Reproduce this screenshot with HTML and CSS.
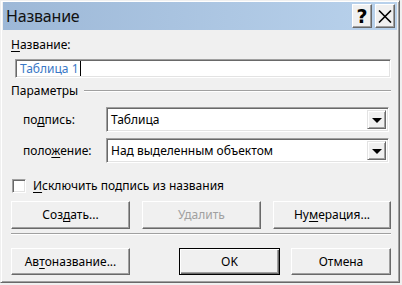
FILE: index.html
```html
<!DOCTYPE html>
<html lang="ru">
<head>
<meta charset="utf-8">
<title>Название</title>
<link rel="stylesheet" href="styles.css">
</head>
<body>
<div class="window">
  <div class="titlebar">
    <span class="title">Название</span>
    <div class="tb-buttons">
      <div class="tb-btn help">?</div>
      <div class="tb-btn close">
        <svg width="14" height="13" viewBox="0 0 14 13"><path d="M1 0.5 L13 12.5 M13 0.5 L1 12.5" stroke="#000" stroke-width="1.6" fill="none"/></svg>
      </div>
    </div>
  </div>
  <div class="content">
    <div class="lbl-name"><u>Н</u>азвание:</div>
    <div class="textbox"><span class="tb-val">Таблица 1</span><span class="caret"></span></div>
    <div class="group"><span class="group-title">Параметры</span><span class="group-line"></span></div>
    <div class="field-row">
      <span class="field-lbl">по<u>д</u>пись:</span>
      <div class="combo"><span class="combo-val">Таблица</span><div class="dd"><span class="arrow"></span></div></div>
    </div>
    <div class="field-row second">
      <span class="field-lbl">поло<u>ж</u>ение:</span>
      <div class="combo"><span class="combo-val">Над выделенным объектом</span><div class="dd"><span class="arrow"></span></div></div>
    </div>
    <div class="check-row">
      <span class="checkbox"></span>
      <span class="check-lbl"><u>И</u>сключить подпись из названия</span>
    </div>
    <div class="btn-row3">
      <div class="btn">Соз<u>д</u>ать...</div>
      <div class="btn disabled">Удалить</div>
      <div class="btn">Ну<u>м</u>ерация...</div>
    </div>
    <div class="sep"></div>
    <div class="btn-row-bottom">
      <div class="btn auto">Ав<u>т</u>оназвание...</div>
      <div class="spacer"></div>
      <div class="btn default">OK</div>
      <div class="btn cancel">Отмена</div>
    </div>
  </div>
</div>
</body>
</html>
```

FILE: styles.css
```css
html, body {
  margin: 0;
  padding: 0;
  background: #f0f0f0;
}
body {
  font-family: "Noto Sans", "Open Sans", sans-serif;
  font-size: 12px;
  color: #000;
}
u { text-decoration: underline; text-underline-offset: 2px; }

.window {
  width: 400px;
  height: 283px;
  box-sizing: border-box;
  background: #f0f0f0;
  border: 1px solid;
  border-color: #f0f0f0 #696969 #696969 #f0f0f0;
  box-shadow: inset 1px 1px 0 #ffffff, inset -1px -1px 0 #a0a0a0;
  padding: 1px 2px 2px 2px;
  display: flex;
  flex-direction: column;
}

.titlebar {
  height: 28px;
  flex: none;
  background: linear-gradient(to right, #9db8d7 0%, #b9d2ec 100%);
  display: flex;
  align-items: center;
  justify-content: space-between;
  padding-left: 3px;
}
.title {
  font-family: "Noto Sans", sans-serif;
  font-size: 16px;
  letter-spacing: -0.2px;
  color: #111;
  line-height: 20px;
}
.tb-buttons {
  display: flex;
  gap: 3px;
  margin-right: 2px;
}
.tb-btn {
  width: 20px;
  height: 24px;
  box-sizing: border-box;
  background: #f0f0f0;
  border: 1px solid;
  border-color: #ffffff #696969 #696969 #ffffff;
  box-shadow: inset -1px -1px 0 #a0a0a0;
  display: flex;
  align-items: center;
  justify-content: center;
}
.help {
  font-family: "DejaVu Sans", sans-serif;
  font-weight: bold;
  font-size: 19px;
  line-height: 20px;
}

.content {
  padding: 7px 6px 0 8px;
  display: flex;
  flex-direction: column;
}
.lbl-name {
  line-height: 16px;
  height: 16px;
}
.textbox {
  margin: 6px 0 0 4px;
  height: 19px;
  box-sizing: border-box;
  background: #fff;
  border: 1px solid;
  border-color: #a0a0a0 #ffffff #ffffff #a0a0a0;
  box-shadow: inset 1px 1px 0 #696969, inset -1px -1px 0 #e3e3e3;
  display: flex;
  align-items: center;
  padding-left: 4px;
}
.tb-val {
  color: #3a78c6;
  font-size: 12px;
  line-height: 14px;
}
.caret {
  width: 1px;
  height: 15px;
  background: #000;
  margin-left: 1px;
}

.group {
  margin-top: 5px;
  height: 16px;
  display: flex;
  align-items: center;
}
.group-title {
  line-height: 16px;
  margin-right: 6px;
}
.group-line {
  flex: 1;
  height: 1px;
  background: #a0a0a0;
  border-bottom: 1px solid #fff;
}

.field-row {
  margin-top: 8px;
  display: flex;
  align-items: center;
}
.field-row.second { margin-top: 6px; }
.field-lbl {
  width: 95px;
  flex: none;
  padding-left: 12px;
  box-sizing: border-box;
}
.combo {
  width: 283px;
  flex: none;
  height: 25px;
  box-sizing: border-box;
  background: #fff;
  border: 1px solid;
  border-color: #a0a0a0 #ffffff #ffffff #a0a0a0;
  box-shadow: inset 1px 1px 0 #696969, inset -1px -1px 0 #e3e3e3;
  display: flex;
  align-items: center;
  justify-content: space-between;
  padding: 2px 2px 2px 4px;
}
.combo-val {
  line-height: 16px;
}
.dd {
  width: 19px;
  height: 19px;
  box-sizing: border-box;
  background: #f0f0f0;
  border: 1px solid;
  border-color: #e3e3e3 #696969 #696969 #e3e3e3;
  box-shadow: inset 1px 1px 0 #fff, inset -1px -1px 0 #a0a0a0;
  display: flex;
  align-items: center;
  justify-content: center;
}
.arrow {
  width: 0;
  height: 0;
  border-left: 5px solid transparent;
  border-right: 5px solid transparent;
  border-top: 5px solid #000;
  margin-top: 1px;
}

.check-row {
  margin-top: 15px;
  display: flex;
  align-items: center;
  height: 15px;
}
.checkbox {
  width: 14px;
  height: 14px;
  box-sizing: border-box;
  background: #fff;
  border: 1px solid;
  border-color: #a0a0a0 #ffffff #ffffff #a0a0a0;
  box-shadow: inset 1px 1px 0 #696969, inset -1px -1px 0 #e3e3e3;
  margin-left: 1px;
  margin-right: 7px;
}
.check-lbl { line-height: 16px; }

.btn {
  box-sizing: border-box;
  background: #f0f0f0;
  border: 1px solid;
  border-color: #ffffff #696969 #696969 #ffffff;
  box-shadow: inset -1px -1px 0 #a0a0a0;
  display: flex;
  align-items: center;
  justify-content: center;
  line-height: 16px;
}
.btn.disabled { color: #a0a0a0; }

.btn-row3 {
  margin-top: 8px;
  display: grid;
  grid-template-columns: 119px 119px 118px;
  column-gap: 12px;
  height: 28px;
}
.sep {
  margin-top: 4px;
  height: 1px;
  background: #a0a0a0;
  border-bottom: 1px solid #fff;
}
.btn-row-bottom {
  margin-top: 13px;
  display: flex;
  height: 27px;
}
.btn.auto { width: 119px; }
.spacer { flex: 1; }
.btn.default {
  width: 101px;
  border: 1px solid #000;
  box-shadow: inset 1px 1px 0 #fff, inset -1px -1px 0 #696969, inset -2px -2px 0 #a0a0a0;
}
.btn.cancel { width: 100px; margin-left: 11px; }
```
